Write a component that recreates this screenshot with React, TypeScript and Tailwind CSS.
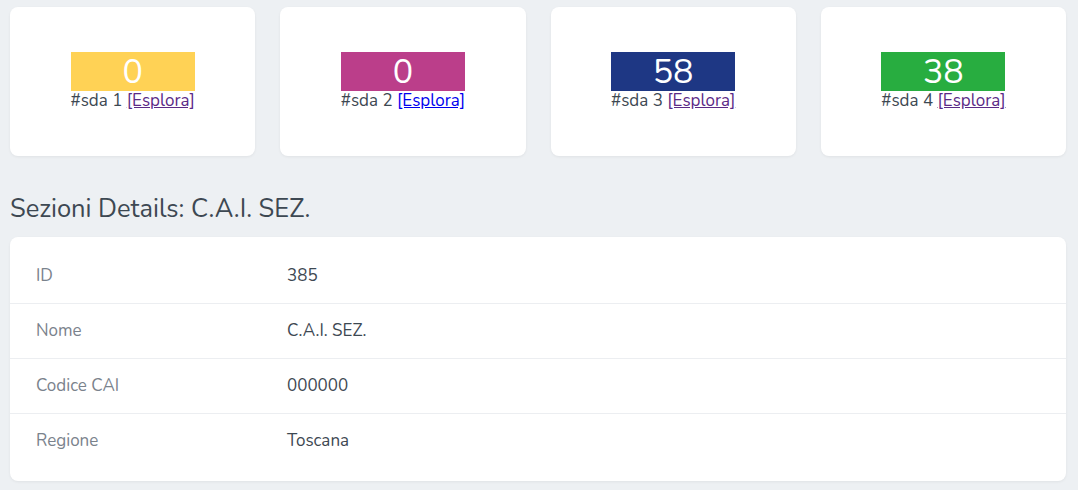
import React from 'react';

interface Stat {
  label: string;
  value: number;
  color: string;
  visited: boolean;
}

const stats: Stat[] = [
  { label: '#sda 1', value: 0, color: 'bg-[#ffd255]', visited: true },
  { label: '#sda 2', value: 0, color: 'bg-[#bb3e8a]', visited: false },
  { label: '#sda 3', value: 58, color: 'bg-[#1e3784]', visited: true },
  { label: '#sda 4', value: 38, color: 'bg-[#28ad40]', visited: true },
];

const details: [string, string][] = [
  ['ID', '385'],
  ['Nome', 'C.A.I. SEZ.'],
  ['Codice CAI', '000000'],
  ['Regione', 'Toscana'],
];

const StatCard: React.FC<{ stat: Stat }> = ({ stat }) => (
  <div className="h-[149px] bg-white rounded-lg shadow-[0_1px_3px_rgba(0,0,0,0.06)] flex flex-col items-center justify-center">
    <div className={`${stat.color} w-[124px] h-[39px] flex items-center justify-center text-white text-[34px] leading-none`}>
      {stat.value}
    </div>
    <div className="text-[17px] leading-[20px] text-[#3d4852]">
      {stat.label}{' '}
      <a href="#" className={`underline ${stat.visited ? 'text-[#5b2a86]' : 'text-[#0000ee]'}`}>
        [Esplora]
      </a>
    </div>
  </div>
);

export default function App() {
  return (
    <div className="min-h-screen bg-[#edf0f3] pt-[7px] pl-[10px] pr-[12px] pb-[10px] font-['Nunito','Noto_Sans',sans-serif]">
      <div className="grid grid-cols-4 gap-x-[25px]">
        {stats.map((s) => (
          <StatCard key={s.label} stat={s} />
        ))}
      </div>

      <h2 className="mt-[37px] mb-[12px] text-[25.5px] leading-[32px] text-[#3d4852]">
        Sezioni Details: C.A.I. SEZ.
      </h2>

      <div className="bg-white rounded-lg shadow-[0_1px_3px_rgba(0,0,0,0.06)] pt-[12px] pb-[13px]">
        {details.map(([k, v], i) => (
          <div
            key={k}
            className={`grid grid-cols-[251px_1fr] items-center pl-[26px] text-[17px] ${i < details.length - 1 ? 'border-b border-[#eceef1] h-[55px]' : 'h-[54px]'}`}
          >
            <span className="text-[#7a828c]">{k}</span>
            <span className="text-[#3d4852]">{v}</span>
          </div>
        ))}
      </div>
    </div>
  );
}
